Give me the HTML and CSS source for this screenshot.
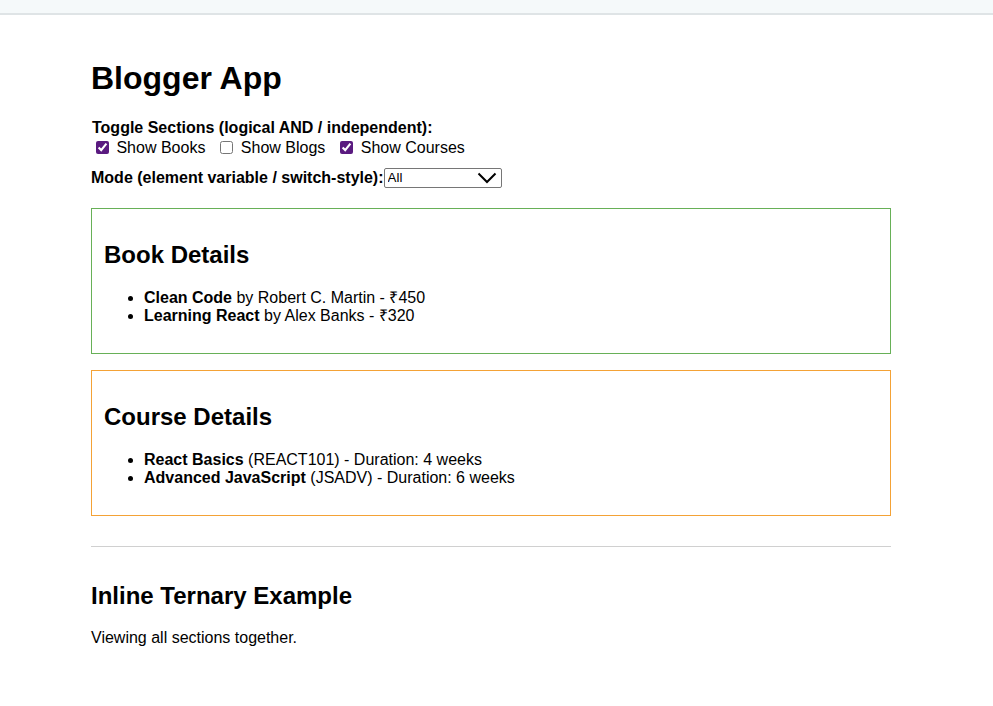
FILE: index.html
```html
<!DOCTYPE html>
<html lang="en">
<head>
<meta charset="utf-8">
<title>Blogger App</title>
<link rel="stylesheet" href="styles.css">
</head>
<body>
<div class="topbar"></div>
<main class="app">
  <h1 class="title">Blogger App</h1>
  <div class="toggles">
    <div class="toggle-label">Toggle Sections (logical AND / independent):</div>
    <div class="toggle-row">
      <label class="check"><input type="checkbox" checked> Show Books</label>
      <label class="check"><input type="checkbox"> Show Blogs</label>
      <label class="check"><input type="checkbox" checked> Show Courses</label>
    </div>
  </div>
  <div class="mode">
    <label class="mode-label" for="mode">Mode (element variable / switch-style):</label><span class="select-wrap"><select id="mode" class="mode-select">
      <option>All</option>
      <option>Books</option>
      <option>Blogs</option>
      <option>Courses</option>
    </select><svg class="select-arrow" width="20" height="12" viewBox="0 0 20 12" aria-hidden="true"><path d="M1.5 1.5 L10 10 L18.5 1.5" fill="none" stroke="#000" stroke-width="2"/></svg></span>
  </div>
  <section class="card card-books">
    <h2 class="card-title">Book Details</h2>
    <ul class="card-list">
      <li><b>Clean Code</b> by Robert C. Martin - ₹450</li>
      <li><b>Learning React</b> by Alex Banks - ₹320</li>
    </ul>
  </section>
  <section class="card card-courses">
    <h2 class="card-title">Course Details</h2>
    <ul class="card-list">
      <li><b>React Basics</b> (REACT101) - Duration: 4 weeks</li>
      <li><b>Advanced JavaScript</b> (JSADV) - Duration: 6 weeks</li>
    </ul>
  </section>
  <hr class="divider">
  <h2 class="ternary-title">Inline Ternary Example</h2>
  <p class="ternary-text">Viewing all sections together.</p>
</main>
</body>
</html>
```
FILE: styles.css
```css
html, body {
  margin: 0;
  padding: 0;
  background: #ffffff;
}
body {
  font-family: "Liberation Sans", Arial, sans-serif;
  font-size: 16px;
  color: #000;
}
.topbar {
  height: 13px;
  background: #f5f9fa;
  border-bottom: 2px solid #dfe4e6;
}
.app {
  width: 800px;
  margin-left: 91px;
  padding-top: 24px;
  padding-bottom: 40px;
}
.title {
  font-size: 32px;
  font-weight: bold;
  margin: 21.44px 0;
}
.toggles {
  margin-bottom: 10px;
}
.toggle-label {
  font-weight: bold;
  padding-left: 1px;
}
.toggle-row {
  display: flex;
  align-items: center;
  height: 21px;
  gap: 10px;
}
.check input {
  accent-color: #5a1a80;
  margin: 3px 3px 3px 5px;
  vertical-align: -1px;
}
.mode {
  display: flex;
  align-items: center;
  margin-bottom: 20px;
}
.mode-label {
  font-weight: bold;
}
.select-wrap {
  position: relative;
  display: inline-block;
  width: 118px;
  height: 20px;
}
.mode-select {
  -webkit-appearance: none;
  appearance: none;
  box-sizing: border-box;
  width: 118px;
  height: 20px;
  margin: 0;
  padding: 0 0 0 3px;
  border: 1px solid #767676;
  border-radius: 2px;
  background: #fff;
  color: #000;
  font-family: "Liberation Sans", Arial, sans-serif;
  font-size: 13.33px;
}
.select-arrow {
  position: absolute;
  right: 5px;
  top: 4px;
  pointer-events: none;
}
.card {
  border: 1px solid #67b057;
  padding: 12px;
  margin-bottom: 16px;
}
.card-courses {
  border-color: #f4a236;
}
.card-title {
  font-size: 24px;
  margin: 19.92px 0;
}
.card-list {
  margin: 16px 0;
  padding-left: 40px;
}
.card-list li {
  line-height: 18px;
  height: 18px;
}
.divider {
  border: none;
  border-top: 1px solid #d0d0d0;
  margin: 30px 0 0;
}
.ternary-title {
  font-size: 24px;
  margin: 35px 0 19.92px;
}
.ternary-text {
  margin: 0;
}
```
